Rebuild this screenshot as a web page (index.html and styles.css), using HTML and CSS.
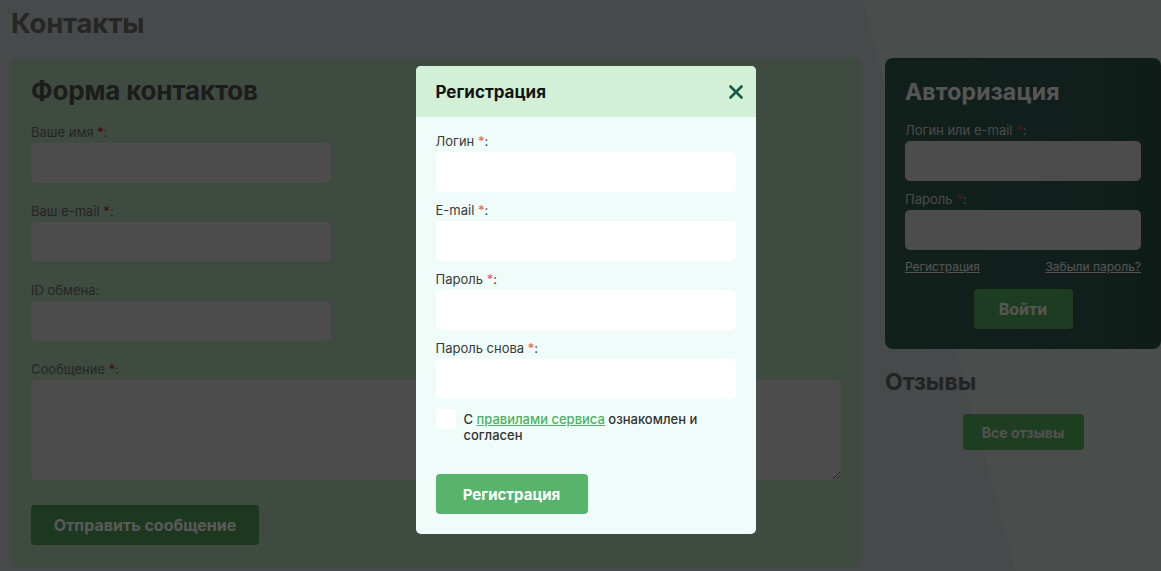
FILE: index.html
```html
<!DOCTYPE html>
<html lang="ru">
<head>
<meta charset="utf-8">
<title>Контакты</title>
<link rel="stylesheet" href="styles.css">
</head>
<body>
<main class="page">
  <h1 class="page-title">Контакты</h1>
  <div class="layout">
    <section class="card contact">
      <h2 class="card-title">Форма контактов</h2>
      <form class="form">
        <div class="field">
          <label class="label">Ваше имя <span class="req">*</span>:</label>
          <input class="input input-short" type="text">
        </div>
        <div class="field">
          <label class="label">Ваш e-mail <span class="req">*</span>:</label>
          <input class="input input-short" type="text">
        </div>
        <div class="field">
          <label class="label">ID обмена:</label>
          <input class="input input-short" type="text">
        </div>
        <div class="field">
          <label class="label">Сообщение <span class="req">*</span>:</label>
          <textarea class="input textarea"></textarea>
        </div>
        <button class="btn btn-send" type="button">Отправить сообщение</button>
      </form>
    </section>
    <aside class="sidebar">
      <section class="card auth">
        <h2 class="auth-title">Авторизация</h2>
        <div class="field field-tight">
          <label class="label">Логин или e-mail <span class="req">*</span>:</label>
          <input class="input" type="text">
        </div>
        <div class="field field-tight">
          <label class="label">Пароль <span class="req">*</span>:</label>
          <input class="input" type="password">
        </div>
        <div class="auth-links">
          <a href="#">Регистрация</a>
          <a href="#">Забыли пароль?</a>
        </div>
        <div class="center">
          <button class="btn btn-login" type="button">Войти</button>
        </div>
      </section>
      <section class="reviews">
        <h2 class="reviews-title">Отзывы</h2>
        <div class="center">
          <a class="btn btn-reviews" href="#">Все отзывы</a>
        </div>
      </section>
    </aside>
  </div>
</main>

<div class="overlay">
  <div class="modal">
    <div class="modal-head">
      <span class="modal-title">Регистрация</span>
      <svg class="modal-close" width="14" height="14" viewBox="0 0 14 14" aria-hidden="true">
        <path d="M1.5 1.5 L12.5 12.5 M12.5 1.5 L1.5 12.5" stroke="#17584a" stroke-width="2.6" stroke-linecap="round" fill="none"/>
      </svg>
    </div>
    <div class="modal-body">
      <div class="m-field">
        <label class="m-label">Логин <span class="m-req">*</span>:</label>
        <input class="m-input" type="text">
      </div>
      <div class="m-field">
        <label class="m-label">E-mail <span class="m-req">*</span>:</label>
        <input class="m-input" type="text">
      </div>
      <div class="m-field">
        <label class="m-label">Пароль <span class="m-req">*</span>:</label>
        <input class="m-input" type="password">
      </div>
      <div class="m-field">
        <label class="m-label">Пароль снова <span class="m-req">*</span>:</label>
        <input class="m-input" type="password">
      </div>
      <div class="agree">
        <span class="checkbox"></span>
        <p class="agree-text">С <a href="#">правилами сервиса</a> ознакомлен и согласен</p>
      </div>
      <button class="m-btn" type="button">Регистрация</button>
    </div>
  </div>
</div>
</body>
</html>
```

FILE: styles.css
```css
* { box-sizing: border-box; }

html, body {
  margin: 0;
  height: 100%;
}

body {
  font-family: Inter, "Noto Sans", sans-serif;
  background: linear-gradient(75deg, #c9d4d4 0%, #c9d4d4 77.3%, #d3dcdb 77.3%, #d3dcdb 100%) fixed;
  color: #6a6a6a;
  overflow: hidden;
}

.page {
  padding: 7px 1px 0 11px;
}

.page-title {
  margin: 0 0 19px;
  font-size: 27.5px;
  line-height: 32px;
  font-weight: 700;
  color: #6e6e6e;
  letter-spacing: -0.2px;
}

.layout {
  display: grid;
  grid-template-columns: 850px 276px;
  column-gap: 24px;
  align-items: start;
}

.card {
  border-radius: 8px;
}

.contact {
  background: #b4d3b7;
  padding: 17px 20px 23px;
}

.card-title {
  margin: 0 0 16px;
  font-size: 26px;
  line-height: 32px;
  font-weight: 700;
  color: #4e5451;
  letter-spacing: -0.2px;
}

.form {
  display: flex;
  flex-direction: column;
  align-items: flex-start;
}

.field {
  display: flex;
  flex-direction: column;
  margin-bottom: 19px;
  width: 100%;
}

.label {
  font-size: 13px;
  line-height: 18px;
  margin-bottom: 2px;
  color: #6c6c6c;
}

.req { color: #c02020; }

.input {
  display: block;
  border: none;
  outline: none;
  border-radius: 5px;
  background: #d9d9d9;
  height: 40px;
  width: 100%;
  font: inherit;
}

.input-short { width: 300px; }

.textarea {
  height: 100px;
  resize: vertical;
  margin-bottom: 6px;
}

.btn {
  display: inline-flex;
  align-items: center;
  justify-content: center;
  border: none;
  border-radius: 4px;
  font-family: inherit;
  font-weight: 700;
  text-decoration: none;
  cursor: pointer;
}

.btn-send {
  width: 228px;
  height: 40px;
  background: #50a05b;
  color: #ffffff;
  font-size: 16px;
}

.sidebar {
  display: flex;
  flex-direction: column;
}

.auth {
  background: linear-gradient(90deg, #345c51 0%, #335b50 70%, #2b5247 100%);
  padding: 20px;
}

.auth-title {
  margin: 0 0 15px;
  font-size: 23px;
  line-height: 28px;
  font-weight: 700;
  color: #f7f7f7;
  letter-spacing: 0.2px;
}

.auth .label { color: #d2d2d2; }
.auth .req { color: #e04040; }

.field-tight { margin-bottom: 9px; }

.auth-links {
  display: flex;
  justify-content: space-between;
  font-size: 12px;
  line-height: 16px;
  margin-top: 1px;
}

.auth-links a {
  color: #f0f0f0;
  text-decoration: underline;
}

.center {
  display: flex;
  justify-content: center;
}

.btn-login {
  margin-top: 14px;
  width: 99px;
  height: 40px;
  background: #55b061;
  color: #f5f5f5;
  font-size: 16px;
}

.reviews {
  padding-top: 19px;
}

.reviews-title {
  margin: 0 0 18px;
  font-size: 23px;
  line-height: 28px;
  font-weight: 700;
  color: #646464;
}

.btn-reviews {
  width: 121px;
  height: 36px;
  background: #58b162;
  color: #e8e8e8;
  font-size: 14px;
}

/* modal */
.overlay {
  position: fixed;
  inset: 0;
  background: rgba(0, 0, 0, 0.65);
  display: flex;
  justify-content: center;
  align-items: flex-start;
  padding: 66px 0 0 10px;
}

.modal {
  width: 340px;
  border-radius: 5px;
  overflow: hidden;
  background: #effcf9;
}

.modal-head {
  height: 51px;
  background: #d1f0d5;
  display: flex;
  align-items: center;
  justify-content: space-between;
  padding: 0 13px 0 20px;
}

.modal-title {
  font-size: 17px;
  font-weight: 700;
  color: #141414;
}

.modal-close { display: block; }

.modal-body {
  padding: 15px 20px 20px;
  display: flex;
  flex-direction: column;
  align-items: flex-start;
}

.m-field {
  display: flex;
  flex-direction: column;
  width: 100%;
  margin-bottom: 9px;
}

.m-label {
  font-size: 13px;
  line-height: 18px;
  margin-bottom: 2px;
  color: #3a3a3a;
}

.m-req { color: #f25656; }

.m-input {
  display: block;
  width: 100%;
  height: 40px;
  border: none;
  outline: none;
  border-radius: 5px;
  background: #ffffff;
}

.agree {
  display: flex;
  align-items: flex-start;
  gap: 8px;
  margin-top: 1px;
}

.checkbox {
  flex: none;
  width: 20px;
  height: 20px;
  border-radius: 3px;
  background: #ffffff;
}

.agree-text {
  margin: 0;
  font-size: 13px;
  line-height: 16px;
  font-weight: 500;
  color: #333333;
  padding-top: 2px;
  max-width: 272px;
}

.agree-text a {
  color: #4fb062;
  text-decoration: underline;
}

.m-btn {
  margin-top: 31px;
  width: 152px;
  height: 40px;
  border: none;
  border-radius: 4px;
  background: #58b46b;
  color: #ffffff;
  font-family: inherit;
  font-size: 15px;
  font-weight: 700;
}
```
